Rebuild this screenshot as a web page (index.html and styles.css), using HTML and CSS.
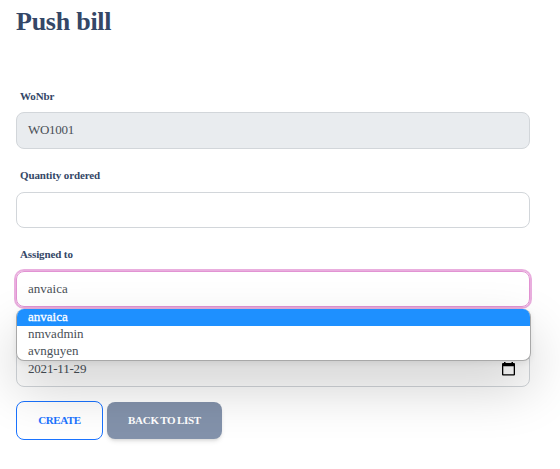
FILE: index.html
```html
<!DOCTYPE html>
<html lang="en">
<head>
<meta charset="utf-8">
<title>Push bill</title>
<link rel="stylesheet" href="styles.css">
</head>
<body>
<main class="page">
  <h1 class="title">Push bill</h1>
  <form class="form">
    <div class="field">
      <div class="label">WoNbr</div>
      <div class="control disabled"><span class="code">WO1001</span></div>
    </div>
    <div class="field">
      <div class="label raised">Quantity ordered</div>
      <div class="control short"></div>
    </div>
    <div class="field select">
      <div class="label raised">Assigned to</div>
      <div class="control short focused"><span>anvaica</span></div>
      <div class="menu">
        <div class="option selected">anvaica</div>
        <div class="option">nmvadmin</div>
        <div class="option">avnguyen</div>
      </div>
    </div>
    <div class="field date">
      <div class="control"><span class="day">2021-11-29</span>
        <svg class="calendar" width="13" height="14" viewBox="0 0 13 14">
          <path d="M2 0h1.5v1h6V0H11v1h1q1 0 1 1v10.5q0 1-1 1H1q-1 0-1-1V2q0-1 1-1h1zM1.3 4.3v7.9h10.4V4.3z" fill="#000" fill-rule="evenodd"/>
        </svg>
      </div>
    </div>
    <div class="actions">
      <div class="btn create">CREATE</div>
      <div class="btn back">BACK TO LIST</div>
    </div>
  </form>
</main>
</body>
</html>
```
FILE: styles.css
```css
* { box-sizing: border-box; }
body {
  margin: 0;
  background: #fff;
  font-family: "Liberation Serif", "Times New Roman", serif;
  color: #495057;
  overflow: hidden;
}
.page { padding: 5px 30px 0 16px; height: 469px; }
.title {
  margin: 0;
  font-size: 26px;
  line-height: 34px;
  font-weight: 700;
  letter-spacing: -.25px;
  color: #344767;
}
.form { padding-top: 49px; }
.field { height: 79px; }
.field:first-child { height: 80px; }
.label {
  height: 24px;
  padding: 0 4px;
  font-size: 11px;
  line-height: 17px;
  font-weight: 700;
  letter-spacing: -.12px;
  color: #344767;
}
.raised { line-height: 15px; }
.control {
  height: 37px;
  display: flex;
  align-items: center;
  justify-content: space-between;
  padding: 0 14px 0 11px;
  border: 1px solid #d2d6da;
  border-radius: 8px;
  font-size: 13px;
}
.code { letter-spacing: -.3px; padding-bottom: 1px; }
.day { letter-spacing: -.2px; }
.control.short { height: 36px; }
.disabled { background: #e9ecef; }
.focused {
  border-color: #e293d3;
  box-shadow: 0 0 0 2px #e9aede;
}
.select { position: relative; z-index: 1; }
.menu {
  position: absolute;
  top: 62px;
  left: 0;
  right: -1px;
  height: 52px;
  overflow: hidden;
  border: 1px solid #a8a8a8;
  border-top: 0;
  border-radius: 8px;
  background: #fff;
  box-shadow: 0 2px 6px rgba(0, 0, 0, .08), 0 25px 54px rgba(0, 0, 0, .2);
}
.option {
  height: 17px;
  padding-left: 11px;
  font-size: 13px;
  line-height: 15px;
}
.selected { background: #1e90ff; color: #fff; -webkit-text-stroke: .3px #fff; }
.date { height: 75px; padding-top: 24px; }
.actions { display: flex; align-items: center; gap: 4px; }
.btn {
  display: flex;
  align-items: center;
  justify-content: center;
  border-radius: 8px;
  padding-bottom: 2px;
  font-size: 11px;
  font-weight: 700;
  letter-spacing: -.4px;
}
.create {
  width: 87px;
  height: 39px;
  border: 1px solid #1a73ff;
  color: #1a73ff;
}
.back {
  width: 115px;
  height: 37px;
  background: #8392ab;
  color: #fff;
  word-spacing: -.7px;
  letter-spacing: -.3px;
  box-shadow: 0 3px 5px -1px rgba(0, 0, 0, .12), 0 2px 3px -1px rgba(0, 0, 0, .07);
}
```
